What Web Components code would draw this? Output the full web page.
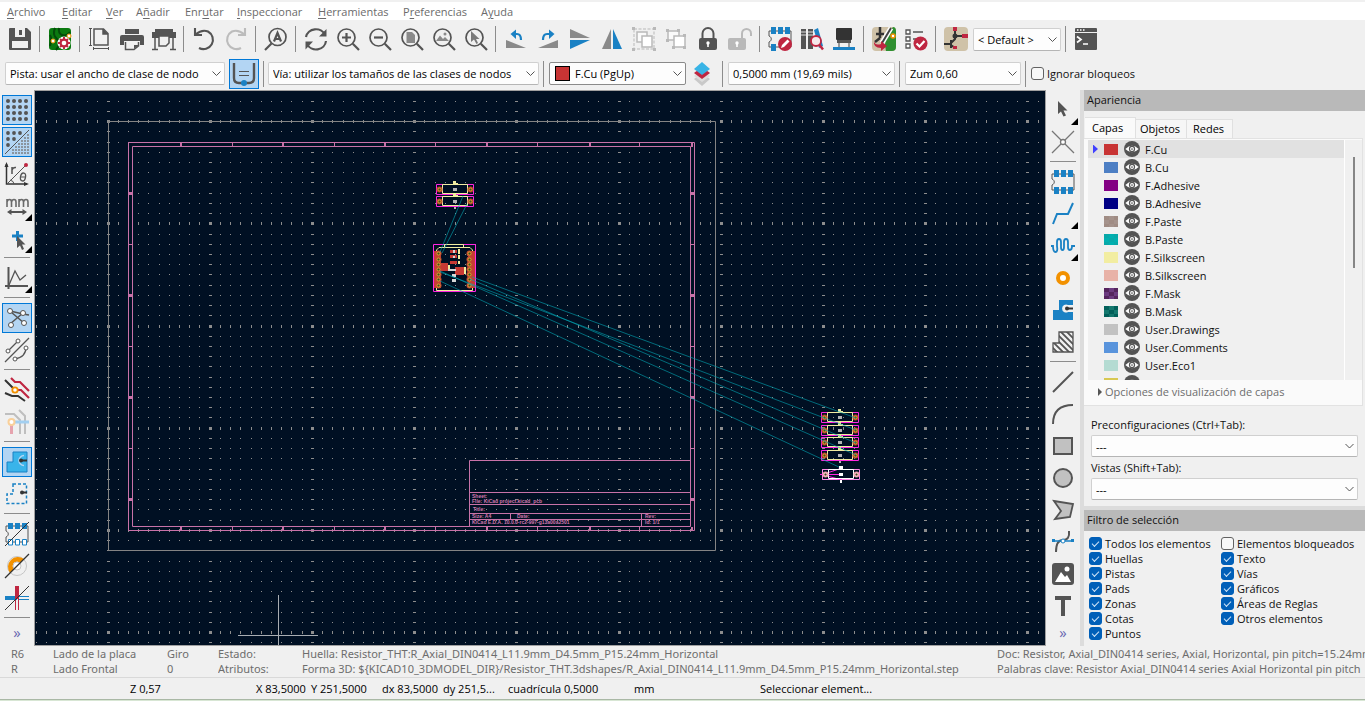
<!DOCTYPE html>
<html lang="es">
<head>
<meta charset="utf-8">
<title>Editor de placas</title>
<style>
html,body{margin:0;height:100%}
body{font:11px/15px "Open Sans","Noto Sans",sans-serif;color:#111;background:#f0f0f0;overflow:hidden}
</style>
</head>
<body>
<pcb-app></pcb-app>
<script>
const D='#545454',B='#1a81c4',R='#bf2641',G='#b9b9b9',O='#f29100';
const lens=(inner)=>`<circle cx="10.5" cy="10.5" r="8.5" fill="none" stroke="${D}" stroke-width="1.7"/><path d="M16.8 16.8L23 23" stroke="${D}" stroke-width="2.2"/>${inner}`;
const rects=(fill,list)=>list.map(([x,y,w,h])=>`<rect x="${x}" y="${y}" width="${w}" height="${h}" fill="${fill}"/>`).join('');
const chip=(pads)=>`<path d="M1 4H23V20H1V15C4 14 4 10 1 9Z" fill="none" stroke="${D}"/>${pads}`;
const ICONS={
save:`<path d="M2 1H19L23 5V22Q23 23 22 23H2Q1 23 1 22V2Q1 1 2 1Z" fill="${D}"/><path d="M7 1H17V10H7ZM4 14H20V21H4Z" fill="#f0f0f0"/><path d="M11 3H14V8H11Z" fill="${D}"/>`,
board:`<rect x="1" y="1" width="22" height="22" rx="3" fill="#0b7a10"/><path d="M7 1Q4 8 9 12T8 23M11 1Q10 6 14 8T22 5M2 8Q4 11 2 19" fill="none" stroke="#044a0a" stroke-width="2"/><circle cx="5" cy="14" r="2" fill="#fff" stroke="${O}"/><circle cx="21" cy="9" r="2" fill="#fff" stroke="${O}"/><circle cx="16" cy="16" r="6.5" fill="#fff"/><circle cx="16" cy="16" r="4.5" fill="${R}"/><path d="M16 10V22M10 16H22M12 12L20 20M20 12L12 20" stroke="${R}" stroke-width="2"/><circle cx="16" cy="16" r="2.3" fill="#fff"/>`,
page:`<path d="M6 2H15.5L20 6.5V18H6ZM15 2V7H20" fill="none" stroke="${D}" stroke-width="1.5"/><path d="M15 2L20 7H15Z" fill="${D}"/><path d="M1 1.5H4M2.5 1.5V18.5M1 18.5H4M5.5 20V23M5.5 21.5H20.5M20.5 20V23" stroke="${D}" fill="none"/>`,
print:`<path d="M5 2H19V7H5ZM2 8H22Q24 8 24 10V18H20V14H4V18H0V10Q0 8 2 8Z" fill="${D}"/><path d="M5.5 15V22.5H14L18.5 19V15" fill="none" stroke="${D}" stroke-width="1.5"/><path d="M14 22V18H19Z" fill="${D}"/>`,
plot:`<path d="M3 2H21V5H24V11H0V5H3Z" fill="${D}"/><path d="M3 11V22M21 11V22M0 22.5H6M18 22.5H24" stroke="${D}" stroke-width="1.5"/><path d="M7 9H17V16L14 19H7Z" fill="#f0f0f0" stroke="${D}" stroke-width="1.5"/>`,
undo:`<path d="M3 1V8H10M3.5 7.5Q10 2 16 4.5A8.5 8.5 0 1 1 7 21" fill="none" stroke="${D}" stroke-width="2.1"/>`,
redo:`<path d="M21 1V8H14M20.5 7.500Q14 2 8 4.500A8.500 8.500 0 1 0 17 21" fill="none" stroke="#bcbcbc" stroke-width="2.1"/>`,
find:`<circle cx="13.5" cy="10" r="8.5" fill="none" stroke="${D}" stroke-width="1.7"/><path d="M7.5 16.5L1 23" stroke="${D}" stroke-width="2.2"/><path d="M10 14.500L13.500 6L17 14.500M11 12H16" fill="none" stroke="${D}" stroke-width="2.200"/>`,
refresh:`<path d="M2 10A10 9.5 0 0 1 21 8M22 14A10 9.5 0 0 1 3 17" fill="none" stroke="${D}" stroke-width="2.2"/><path d="M22.5 2V9.5H15ZM1.5 22.5V14.5H9Z" fill="${D}"/>`,
zin:lens(`<path d="M6 10.5H15M10.5 6V15" stroke="${D}" stroke-width="2.2"/>`),
zout:lens(`<path d="M6 10.5H15" stroke="${D}" stroke-width="2.2"/>`),
zpage:lens(`<path d="M6.5 5H12L15 8V16H6.5Z" fill="#8a8a8a"/>`),
zobj:lens(`<path d="M4 14L8 8.5 11 12 13 10 17 14Z" fill="#8a8a8a"/><circle cx="13" cy="7" r="1.5" fill="#8a8a8a"/>`),
zsel:lens(`<path d="M7 4V15L10 12.5 12.5 17 14 16 12 12H15.5Z" fill="#7a7a7a"/>`),
rotl:`<path d="M2 13V21H22Z" fill="#8a8a8a"/><path d="M9 7H13Q17 7 17 13" fill="none" stroke="${B}" stroke-width="2.2"/><path d="M12 2.5L6.5 7 12 12Z" fill="${B}"/>`,
rotr:`<path d="M22 13V21H2Z" fill="#8a8a8a"/><path d="M15 7H11Q7 7 7 13" fill="none" stroke="${B}" stroke-width="2.2"/><path d="M13 2.5L18.5 7 13 12Z" fill="${B}"/>`,
flipv:`<path d="M2 2L22 11H2Z" fill="#8a8a8a"/><path d="M2 13H22L2 22Z" fill="${B}"/>`,
fliph:`<path d="M11 2V22H2Z" fill="#8a8a8a"/><path d="M13 2V22H22Z" fill="${B}"/>`,
group:`<rect x="2" y="2" width="20" height="20" fill="none" stroke="${G}" stroke-dasharray="3 1.5"/><path d="M5 5H15V15H5Z" fill="#fafafa" stroke="${G}" stroke-width="1.5"/><path d="M10 9H20V20H10Z" fill="#fff" stroke="${G}" stroke-width="1.5"/>${rects(G,[[0,0,3,3],[21,0,3,3],[0,21,3,3],[21,21,3,3]])}`,
ungroup:`<path d="M4 4H15V13H4Z" fill="#fafafa" stroke="${G}" stroke-width="1.5"/><path d="M10 9H21V20H10Z" fill="#fff" stroke="${G}" stroke-width="1.5"/>${rects(G,[[2,2,3,3],[13,2,3,3],[2,12,3,3],[8,19,3,3],[19,19,3,3],[19,7,3,3]])}`,
lock:`<rect x="3" y="11" width="18" height="12" rx="2" fill="${D}"/><path d="M6.500 12V6.500A5.500 5.500 0 0 1 17.500 6.500V12" fill="none" stroke="${D}" stroke-width="2"/><circle cx="12" cy="16" r="1.7" fill="#fff"/><path d="M11.2 16H12.8V20H11.2Z" fill="#fff"/>`,
unlock:`<rect x="0" y="11" width="18" height="12" rx="2" fill="${G}"/><path d="M14 12V6.500A4.500 4.500 0 0 1 23 6.500V9" fill="none" stroke="${G}" stroke-width="2"/><circle cx="9" cy="16" r="1.7" fill="#fff"/><path d="M8.2 16H9.8V20H8.2Z" fill="#fff"/>`,
fpedit:chip(rects(B,[[3,0,5,7],[10,0,5,7],[17,0,5,7],[3,17,5,7]]))+`<circle cx="17" cy="17" r="7" fill="${R}"/><path d="M13 21L14 18 19.5 12.5 21.5 14.5 16 20Z" fill="#fff"/>`,
fplib:`<path d="M1 2H6V22H1ZM8 2H13V22H8Z" fill="${D}"/><path d="M14 3L18 1 23 19 19 21Z" fill="${B}"/><path d="M1 5H6M1 8H6M8 5H13M8 8H13" stroke="#ddd"/><circle cx="16" cy="14" r="5" fill="#f5e8ea" stroke="${R}" stroke-width="1.8"/><path d="M19.5 18L23 22.5" stroke="${R}" stroke-width="2.5"/>`,
view3d:`<rect x="4" y="1" width="16" height="12" rx="1" fill="#333"/><rect x="5" y="13" width="14" height="3" fill="#555"/><path d="M7 16V20M17 16V20" stroke="#999" stroke-width="2"/><path d="M1 20H23V23H1Z" fill="${B}"/>`,
update:`<rect x="0" y="0" width="24" height="24" rx="4" fill="#cfc2a8"/><path d="M14 24Q10 12 21 0Q24 0 24 4V20Q24 24 20 24Z" fill="#2f8f30"/><path d="M8 0V11M4 7H12M8 11L3 15" stroke="#333" stroke-width="2.5"/><path d="M19 1L10 16" stroke="#fff" stroke-width="5"/><path d="M19 1L10 16" stroke="#444" stroke-width="2"/><circle cx="21" cy="9" r="2" fill="#fff" stroke="${O}" stroke-width="1.5"/><path d="M2 14Q3 19 9 17V14L15 19 9 24V21Q1 21 2 14Z" fill="${R}"/>`,
drc:`<path d="M2 3H6V7H2ZM2 10H6V14H2ZM2 17H6V21H2Z" fill="#fff" stroke="${D}" stroke-width="1.3"/><path d="M9 5H19M9 12H14" stroke="${D}" stroke-width="1.5"/><circle cx="16.5" cy="16.5" r="7" fill="${R}"/><path d="M12.5 16.5L15.5 19.5 20.5 14" fill="none" stroke="#fff" stroke-width="2.2"/>`,
schem:`<rect x="0" y="0" width="24" height="24" rx="4" fill="#cfc2a8"/><path d="M0 17H7M7 13V21M7 16L11 12V4M11 9H18M7 18L11 21" fill="none" stroke="#333" stroke-width="2"/><circle cx="11" cy="9" r="2.5" fill="#333"/>${rects(R,[[9,0,4,4],[18,7,6,4],[9,19,4,3]])}`,
console:`<path d="M2 1H22Q23 1 23 2V5H1V2Q1 1 2 1ZM1 6H23V22Q23 23 22 23H2Q1 23 1 22Z" fill="${D}"/><path d="M3 3H4.5M6 3H7.5M9 3H10.5" stroke="#fff" stroke-width="1.5"/><path d="M3 9.500L7 12.500 3 15.500M9 17H14" fill="none" stroke="#fff" stroke-width="1.7"/>`,
autow:`<path d="M2 1V16Q2 21 7 21H17Q22 21 22 16V1" fill="none" stroke="${D}" stroke-width="2.4"/><path d="M7 9.500H17M7 13.500H17" stroke="${D}"/><circle cx="12" cy="21" r="3" fill="${B}"/>`,
layers:`<path d="M12 11L20 17 12 24 4 17Z" fill="#c9c9c9"/><path d="M12 8L20 14 12 20 4 14Z" fill="#ddd"/><path d="M12 5L20 11 12 17 4 11Z" fill="${R}"/><path d="M12 0L20 7 12 13 4 7Z" fill="#39b4e6"/>`,
grid:[3,9,15,21].map(y=>[3,9,15,21].map(x=>`<circle cx="${x}" cy="${y}" r="2" fill="${D}"/>`).join('')).join(''),
gridov:`<g fill="${D}"><circle cx="3" cy="3" r="1.9"/><circle cx="9" cy="3" r="1.9"/><circle cx="15" cy="3" r="1.9"/><circle cx="3" cy="9" r="1.9"/><circle cx="9" cy="9" r="1.9"/><circle cx="3" cy="15" r="1.9"/></g><path d="M0 24L24 0" stroke="${D}"/><g fill="#8a949e">${[[23,5],[20,8],[23,8],[17,11],[20,11],[23,11],[14,14],[17,14],[20,14],[23,14],[11,17],[14,17],[17,17],[20,17],[23,17],[8,20],[11,20],[14,20],[17,20],[20,20],[23,20],[8,23],[11,23],[14,23],[17,23],[20,23],[23,23]].map(([x,y])=>`<rect x="${x-1}" y="${y-1}" width="2" height="2"/>`).join('')}</g>`,
polar:`<path d="M1.5 2V22H22" fill="none" stroke="#333" stroke-width="1.5"/><path d="M1.5 0L3.5 5H-.5ZM24 22L19 20V24Z" fill="#333"/><path d="M2 22L21 3M5 18Q9 19 9 22" fill="none" stroke="${D}"/><circle cx="21" cy="3" r="2" fill="${R}"/><path d="M7 12V5M7 8Q8 5 11 5.500" fill="none" stroke="${D}" stroke-width="1.5"/><ellipse cx="18" cy="15" rx="2.5" ry="4" fill="none" stroke="${D}" stroke-width="1.3" transform="rotate(12 18 15)"/><path d="M16 15H20" stroke="${D}"/>`,
mm:`<path d="M2 13V5M2 8Q2.500 5.500 4.500 5.500T6.500 8V13M6.500 8Q7 5.500 9 5.500T11 8V13M14 13V5M14 8Q14.500 5.500 16.500 5.500T18.500 8V13M18.500 8Q19 5.500 21 5.500T23 8V13" fill="none" stroke="#6a6a6a" stroke-width="1.6"/><path d="M5 18H19" stroke="${D}" stroke-width="2"/><path d="M6.5 15V21L2 18ZM17.5 15V21L22 18Z" fill="${D}"/>`,
cursor:`<path d="M7 10H18M12.5 5V15" stroke="${B}" stroke-width="3"/><path d="M12 10V22L15 19.500 17 24 19 23 17 18.500H20.500Z" fill="${D}"/>`,
axes:`<path d="M3.5 1V20H23M0 20H3M3.5 20V23" fill="none" stroke="${D}" stroke-width="2"/><path d="M4 19L10 5 15 14 21 9" fill="none" stroke="${D}" stroke-width="1.3"/>`,
rats:`<path d="M5 5L18 8 24 9M18 7L5 18M6 6L19 17" stroke="${D}" stroke-width="1.5" fill="none"/><g fill="#fff" stroke="${D}"><circle cx="5" cy="5" r="2.5"/><circle cx="18" cy="7" r="2.5"/><circle cx="6" cy="19" r="2.5"/><circle cx="19" cy="17" r="2.5"/></g>`,
ratscurve:`<path d="M0 24L24 0M3 13L13 3M10 21Q21 19 21 9" fill="none" stroke="${D}" stroke-width="1.3"/><g fill="#fff" stroke="${D}"><circle cx="3" cy="13" r="2"/><circle cx="13" cy="3" r="2"/><circle cx="10" cy="21" r="2"/><circle cx="21" cy="10" r="2"/></g>`,
hilite:`<path d="M0 2L9 11M0 15L7 18H13L20 23" fill="none" stroke="#333" stroke-width="2"/><path d="M6 0L10 4H15L24 13M10 12H16L24 20" fill="none" stroke="${R}" stroke-width="2.2"/><circle cx="10" cy="12" r="2.7" fill="#fff" stroke="${O}" stroke-width="1.8"/>`,
dim:`<path d="M0 4H9L15 10V24M14 0L20 6V24" fill="none" stroke="#bfbfbf" stroke-width="2"/><path d="M6 12H24" stroke="#a3cff0" stroke-width="3"/><path d="M6.5 13V24" stroke="#e6a3ae" stroke-width="3"/><circle cx="6.5" cy="12" r="3" fill="#fff" stroke="#f9d09a" stroke-width="2"/>`,
zone:`<path d="M8 2H22V22H2V12H8Z" fill="#39b4ea" stroke="${B}"/><path d="M19 5.500A5 5 0 1 0 19 15.500" fill="none" stroke="#b3d5f3" stroke-width="1.5"/><path d="M15 10.500H22" stroke="#333" stroke-width="2"/><circle cx="16" cy="10.5" r="2" fill="#333"/>`,
zoneout:`<path d="M8 2H21.500V21.500H2V12H8Z" fill="none" stroke="${B}" stroke-width="1.5" stroke-dasharray="3 2"/><path d="M16 10.500H22" stroke="#333" stroke-width="2"/><circle cx="17" cy="10.5" r="2" fill="#333"/>`,
fpout:chip(rects(B,[[3,1,5,6],[10,1,5,6],[17,1,5,6]])+`<path d="M3.500 17.500H7.500V23H3.500ZM10.500 17.500H14.500V23H10.500ZM17.500 17.500H21.500V23H17.500Z" fill="#fff" stroke="${B}"/>`)+`<path d="M0 24L24 0" stroke="#333"/>`,
viaout:`<circle cx="12" cy="12" r="9.5" fill="#f0f0f0" stroke="#c6c6c6"/><path d="M5 19A10 10 0 0 1 19 5L15 9A4 4 0 0 0 9 15Z" fill="${O}"/><circle cx="12" cy="12" r="4" fill="#fff" stroke="#c6c6c6"/><path d="M0 24L24 0" stroke="#333" stroke-width="1.3"/>`,
trackout:`<path d="M0 12H12" stroke="${B}" stroke-width="4"/><path d="M12 0V13" stroke="${R}" stroke-width="4"/><path d="M13 10.500H24M13 13.500H24" stroke="${B}"/><path d="M10.500 13V24M13.500 13V24" stroke="${R}"/><path d="M0 24L24 0" stroke="#333"/>`,
select:`<path d="M7 3V16L10 13.500 12.500 18.500 15 17.500 12.500 12.500H16.500Z" fill="${D}"/>`,
localrats:`<path d="M1 1L10 10M14 14L23 23M23 1L14 10M10 14L1 23" stroke="#777" stroke-width="1.3"/><circle cx="12" cy="12" r="2.5" fill="#fff" stroke="#777" stroke-width="1.3"/>`,
footprint:chip(rects(B,[[3,0,5,7],[10,0,5,7],[17,0,5,7],[3,17,5,7],[10,17,5,7],[17,17,5,7]])),
track:`<path d="M2 22L6 12H17L22 1" fill="none" stroke="${B}" stroke-width="2"/>`,
tune:`<path d="M0 12H2Q2 18 4.500 18T6 12V8Q6 5 8 5T10 8V13Q10 16 11.500 16T13 13V8Q13 5 15 5T17 8V13Q17 16 19 16T21 12H24" fill="none" stroke="${B}" stroke-width="1.8"/>`,
via:`<circle cx="12" cy="12" r="5" fill="#fff" stroke="${O}" stroke-width="4"/>`,
addzone:`<path d="M8 2H22V22H2V12H8Z" fill="${B}"/><path d="M22 7H17A4 4 0 1 0 17 14H22Z" fill="#f0f0f0"/><path d="M16 10.500H22" stroke="#333" stroke-width="2"/><circle cx="16" cy="10.5" r="2" fill="#333"/>`,
rule:`<clipPath id="z"><path d="M8 2H22V22H2V13H8Z"/></clipPath><path clip-path="url(#z)" d="M-2 8L16 26M2 6L22 26M3 1L26 24M8 0L26 18M13 -1L26 12M-3 13L12 28M18 -2L26 6" stroke="${D}" stroke-width="1.8"/><path d="M8 2H22V22H2V13H8Z" fill="none" stroke="${D}" stroke-width="1.3"/>`,
line:`<path d="M2 22L22 2" stroke="${D}" stroke-width="2"/>`,
arc:`<path d="M2 22Q2 3 22 3" fill="none" stroke="${D}" stroke-width="2"/>`,
rect:`<rect x="3" y="4" width="18" height="16" fill="#c1c1c1" stroke="${D}" stroke-width="2"/>`,
circle:`<circle cx="12" cy="12" r="9" fill="#c1c1c1" stroke="${D}" stroke-width="2"/>`,
poly:`<path d="M3 3L22 6 19 19 4 21 10 13Z" fill="#c1c1c1" stroke="${D}" stroke-width="1.8"/>`,
bezier:`<path d="M18 1Q19 10 12 10T5 22" fill="none" stroke="${D}" stroke-width="2"/><path d="M2 11H22" stroke="${B}" stroke-width="1.5"/>${rects(B,[[1,9,3,3],[20,9,3,3]])}<circle cx="12" cy="11" r="2" fill="#fff" stroke="${B}"/>`,
image:`<rect x="1" y="1" width="22" height="22" rx="3" fill="${D}"/><path d="M4 20L10 10 14 15 16 13 20 20Z" fill="#fff"/><circle cx="16" cy="7" r="2.5" fill="#fff"/>`,
text:`<path d="M4 4H20M12 4V22" fill="none" stroke="${D}" stroke-width="4"/>`,
eye:`<circle cx="12" cy="12" r="12" fill="${D}"/><path d="M2 12Q12 2 22 12Q12 22 2 12Z" fill="#fff"/><circle cx="12" cy="12" r="4.7" fill="${D}"/><circle cx="12" cy="12" r="2.9" fill="#fff"/><circle cx="12" cy="12" r="1.3" fill="${D}"/>`
};

/* Registers a custom element whose shadow root is built from a style and a template function. */
function define(name,css,html){
  customElements.define(name,class extends HTMLElement{
    connectedCallback(){
      if(this.shadowRoot)return;
      this.attachShadow({mode:'open'});
      const t=document.createElement('template');
      t.innerHTML=`<style>*{box-sizing:border-box}${css}</style>`+html(this);
      this.shadowRoot.append(t.content.cloneNode(true));
    }
  });
}
const at=(e,n,d='')=>e.getAttribute(n)??d;

define('pcb-icon',`:host{display:block;width:24px;height:24px}:host([small]){width:16px;height:16px}svg{display:block;width:100%;height:100%;overflow:visible}`,
  e=>`<svg viewBox="0 0 24 24" aria-hidden="true">${ICONS[at(e,'name')]}</svg>`);

define('pcb-tool',`:host{display:flex;width:32px;height:32px;flex:none;align-items:center;justify-content:center}
button{position:relative;display:grid;place-items:center;width:30px;height:30px;padding:0;border:1px solid transparent;background:none}
:host([active]) button{border-color:#0078d7;background:#b3d5f3}
:host([flyout]) button::after{content:"";position:absolute;right:-1px;bottom:-1px;border-left:7px solid transparent;border-bottom:7px solid #000}`,
  e=>`<button type="button" aria-label="${at(e,'icon')}"><pcb-icon name="${at(e,'icon')}"></pcb-icon></button>`);

define('pcb-sep',`:host{display:block;flex:none;width:1px;height:26px;background:#8c8c8c;margin:0 4px 0 3px}
:host([wide]){margin:0 5px 0 4px}:host([row]){width:26px;height:1px;margin:3px 0 4px}`,()=>'');

define('pcb-more',`:host{display:block;margin-top:3px}button{display:block;border:0;padding:0;background:none;font:15px/15px "Open Sans",sans-serif;color:#6767b0}`,
  ()=>`<button type="button" aria-label="Más">»</button>`);

define('pcb-select',`:host{display:block;position:relative;height:23px}
select{appearance:none;display:block;width:100%;height:100%;margin:0;padding:0 22px 0 4px;border:1px solid #d0d0d0;border-bottom-color:#b5b5b5;border-radius:2px;background:#fdfdfd;font:inherit;color:#000}
:host([swatch]) select{padding-left:25px;border-color:#8a8a8a}
i{position:absolute;left:6px;top:4px;width:15px;height:15px;border:1px solid #000;background:#c83434}
svg{position:absolute;right:4px;top:0;width:9px;height:100%;pointer-events:none}`,
  e=>`<select aria-label="${at(e,'label')}"><option>${at(e,'value').replace('<','&lt;')}</option></select>${e.hasAttribute('swatch')?'<i></i>':''}<svg viewBox="0 0 9 9"><path d="M.5 2.500L4.500 6.500 8.500 2.500" fill="none" stroke="#555"/></svg>`);

define('pcb-check',`:host{display:block}label{display:flex;align-items:center;gap:3px;height:15px;white-space:nowrap}
input{appearance:none;flex:none;width:13px;height:13px;margin:0;border:1px solid #626262;border-radius:3px;background:#f8f8f8}
input:checked{border-color:#005fb8;background:#005fb8}
input:checked::after{content:"";display:block;width:6px;height:3px;margin:3px 0 0 2px;border:solid #cfe4f7;border-width:0 0 1px 1px;transform:rotate(-45deg)}`,
  e=>`<label><input type="checkbox" ${e.hasAttribute('checked')?'checked':''}><span><slot></slot></span></label>`);

define('pcb-menu',`:host{display:block;background:#fff;border-top:2px solid #f0f0f0;height:20px;color:#6b6b6b}
nav{display:grid;grid-template-columns:55px 44px 30px 49px 52px 81px 85px 78px 50px;padding-left:7px}
button{border:0;padding:0;background:none;font:inherit;line-height:20px;height:18px;color:inherit;text-align:left}u{text-underline-offset:2px}`,
  ()=>`<nav>${['<u>A</u>rchivo','<u>E</u>ditar','<u>V</u>er','A<u>ñ</u>adir','Enr<u>u</u>tar','<u>I</u>nspeccionar','<u>H</u>erramientas','P<u>r</u>eferencias','A<u>y</u>uda'].map(s=>`<button type="button">${s}</button>`).join('')}</nav>`);

define('pcb-bar',`:host{display:flex;align-items:center;height:38px;padding-left:4px;background:#f0f0f0}
:host([options]){height:32px;padding:0 0 1px 5px}
:host([column]){flex-direction:column;height:auto;padding:4px 0 0;overflow:hidden}`,()=>`<slot></slot>`);

define('pcb-board',`:host{display:block;overflow:hidden;background:#001023;border:1px solid #a0a0a0}
svg{display:block;width:100%;height:100%}text{font:bold 5px "Liberation Sans",sans-serif;fill:#d079ae}`,()=>{
  const X=i=>Math.floor(108+10.22*i),Y=j=>Math.floor(121.6+10.22*j);
  let g='';
  for(let j=-2;j<90;j++)for(let i=-7;i<200;i++){
    const mx=i%10===0,my=j%10===0,x=X(i),y=Y(j);
    g+=`M${mx?x-1:x} ${my?y-1:y}h${mx?3:1}v${my?3:1}h${mx?-3:-1}z`;
  }
  const pad=(x,y,c='#b5402c',r='#e0a030')=>`<circle cx="${x}" cy="${y}" r="3" fill="${c}"/><circle cx="${x}" cy="${y}" r="1.5" fill="#40501c" stroke="${r}"/>`;
  const res=y=>`<path d="M.5 ${y-5}h37v10h-37z" stroke="#ff26e2" fill="none"/><path d="M6.500 ${y-5}h25v9h-25z" stroke="#f2eda1" fill="none"/>${pad(3.5,y)}${pad(34.5,y)}<path d="M17 ${y-8.5}h3v2h2v1h-5z" fill="#f2eda1"/><path d="M17 ${y-1.5}h4v3h-4zM18 ${y+5.5}h2v2h-2z" fill="#b4b4b4"/>`;
  let frame='M128.500 142.500h566v388h-566zM132.500 146.500h558v380h-558z';
  for(const x of [232,334,435,537,639])frame+=`M${x}.5 142v4M${x}.5 526v4`;
  for(const y of [244,346,448])frame+=`M128 ${y}.5h4M690 ${y}.5h4`;
  frame+='M690 460.500H469.500V526M469 492.500H690M469 504.500H690M469 513.500H690M469 519.500H690M510.500 513V519M641.500 513V526';
  let blobs='';
  for(const x of [181,283,385,487,590,692])blobs+=`M${x-1} 143h2v4h-2zM${x-1} 527h2v3h-2z`;
  for(const y of [193,295,397,499])blobs+=`M129 ${y-1}h3v3h-3zM691 ${y-1}h3v3h-3z`;
  const pins=[253,259,264,269,274,279,285].map(y=>pad(438.5,y+.5,'#c04a30')+pad(469.5,y+.5,'#c04a30')).join('');
  return `<svg role="img" aria-label="Placa"><g transform="translate(-35 -91)">
<path d="${g}" fill="#8d8d8d" shape-rendering="crispEdges"/>
<path d="M108.500 121.500H715.500V550.500H108.500Z" fill="none" stroke="#848484"/>
<path d="${frame}" fill="none" stroke="#c872a8"/><path d="${blobs}" fill="#c872a8"/>
<text x="472" y="498">Sheet:</text><text x="472" y="503">File: KiCad project.kicad_pcb</text><text x="473" y="511" font-style="italic">Title:</text><text x="472" y="518">Size: A4</text><text x="517" y="518">Date:</text><text x="645" y="518">Rev:</text><text x="472" y="524">KiCad E.D.A. 10.0.0-rc2-997-g13a00a2501</text><text x="645" y="524">Id: 1/1</text>
<g transform="translate(436 0)">${res(189.5)}${res(201.5)}</g>
<g transform="translate(821 0)">${res(417.5)}${res(430.5)}${res(442.5)}${res(455.5)}</g>
<path d="M434 251h7v37h-7zM468 251h7v37h-7zM441 263h7v8h-7zM455 267h9v8h-9zM450 250h7v3h-7zM450 255h7v3h-7zM450 261h7v3h-7z" fill="#c83a34"/>
<path d="M433.500 244.500h42v47h-42z" fill="none" stroke="#ff26e2"/>
<path d="M436.500 251V250L439 247.500H470L472.500 250V251M436.500 288V290.500H472.500V288M444.500 247V244.500H463.500V247" fill="none" stroke="#f2eda1"/>
<path d="M458 249h2v5h-2zM458 255h2v4h-2zM458 261h2v3h-2zM448 265h2v5h-2zM464 267h2v7h-2z" fill="#f2eda1"/>
${pins}
<path d="M452 274h4v3h-4zM452 279h4v3h-4zM448 269h8v2h-8zM453 250h2v3h-2zM453 256h2v2h-2z" fill="#d8d8d8"/>
<path d="M472 277L856 418M440 272L856 430M470 279L856 443M440 271L856 455M440 281L841 468M463 196L440 252M467 204L442 253" fill="none" stroke="#00a6b4" stroke-opacity=".6"/>
<path d="M822.500 469.500h37v10h-37z" fill="none" stroke="#ff8ae8"/>
<path d="M820 474.500H842M827 473L842 468M827 476L842 480" stroke="#ff26e2"/>
<path d="M828.500 469.500h25v9h-25z" fill="none" stroke="#fff"/>
${pad(825.5,474.5,'#f09aa8','#ffc8d8')}${pad(856.5,474.5,'#f09aa8','#ffc8d8')}
<path d="M839 466h4v3h-4zM839 473h4v3h-4zM840 480h2v3h-2z" fill="#fff"/>
<path d="M278.500 595V646M238 635.500H318" stroke="#a8adb2"/>
</g></svg>`;});

define('pcb-layer',`:host{display:flex;align-items:center;height:18px;flex:none}
:host([current]){background:#e1e1e1}
b{width:5px;margin:0 6px 0 5px;height:9px}:host([current]) b{background:#4040ff;clip-path:polygon(0 0,100% 50%,0 100%)}
i{width:14px;height:11px;background:var(--c)}
:host([checker]) i{background:repeating-conic-gradient(var(--c) 0 25%,var(--d) 0 50%) 0 0/10px 8px}
button{border:0;padding:0;margin:0 5px 0 6px;background:none}`,
  ()=>`<b></b><i></i><button type="button" aria-label="Visibilidad"><pcb-icon name="eye" small></pcb-icon></button><span><slot></slot></span>`);

define('pcb-title',`:host{display:block;flex:none;height:21px;padding-left:3px;line-height:20px;background:#b9b9b9}`,()=>`<slot></slot>`);

const LAYERS=[['F.Cu','#c83434'],['B.Cu','#4d7fc4'],['F.Adhesive','#840084'],['B.Adhesive','#000084'],['F.Paste','#a5938c','#a08c84'],['B.Paste','#00b0b0','#08a8a8'],['F.Silkscreen','#f2eda1'],['B.Silkscreen','#e8b2a7'],['F.Mask','#6c3a80','#55245e'],['B.Mask','#14786e','#02605a'],['User.Drawings','#c2c2c2'],['User.Comments','#5994dc'],['User.Eco1','#b4dbd2'],['','#d8c852']];
define('pcb-layers',`:host{display:flex;flex-direction:column;flex:1;min-height:0;background:#f0f0f0}
.tabs{display:flex;align-items:flex-end;padding:6px 0 0 1px;height:27px;flex:none}
.tabs button{height:19px;width:51px;padding:0 0 2px 4px;border:1px solid #e0e0e0;border-bottom:0;border-left:0;background:#f6f6f6;font:inherit;color:#000;text-align:left}
.tabs button:first-child{height:21px;padding:0 0 2px 7px;background:#fafafa}.tabs button:last-child{width:46px;padding-left:6px}
.box{display:flex;flex-direction:column;flex:1;min-height:0;margin:0 2px 0 0;border:1px solid #e2e2e2;border-left:0;background:#fafafa}
.scroll{display:grid;grid-template-columns:minmax(0,1fr) 18px;flex:1;min-height:0;margin:1px 0 0 4px}
.list{display:flex;flex-direction:column;overflow:hidden;background:#f0f0f0}
.track{padding:17px 0 0 8px;background:#f0f0f0;border-left:1px solid #fff}
.thumb{width:2px;height:111px;background:#868686}
.opts{display:block;height:25px;flex:none;padding:0 0 2px 14px;border:0;background:none;font:inherit;color:#6d6d6d;text-align:left}
.opts::before{content:"";display:inline-block;margin-right:3px;border:4px solid transparent;border-left:4px solid #555;border-right:0}`,
  ()=>`<div class="tabs"><button type="button">Capas</button><button type="button">Objetos</button><button type="button">Redes</button></div>
<div class="box"><div class="scroll"><div class="list">${LAYERS.map(([n,c,d],i)=>`<pcb-layer ${i?'':'current'} ${d?'checker':''} style="--c:${c};--d:${d}">${n}</pcb-layer>`).join('')}</div><div class="track"><div class="thumb"></div></div></div>
<button class="opts" type="button">Opciones de visualización de capas</button></div>`);

define('pcb-field',`:host{display:block}span{display:block;height:16px;margin-bottom:2px}pcb-select{height:22px}`,
  e=>`<span>${at(e,'label')}</span><pcb-select label="${at(e,'label')}" value="---"></pcb-select>`);

define('pcb-panel',`:host{display:flex;flex-direction:column;min-height:0;border-left:4px solid #dcdcdc}
.fields{display:grid;gap:3px;flex:none;padding:11px 7px 6px;border-bottom:4px solid #dcdcdc}
.filter{display:grid;grid-template-columns:132px auto;grid-template-rows:repeat(7,15px);grid-auto-flow:column;padding:5px;flex:none}`,
  ()=>`<pcb-title>Apariencia</pcb-title><pcb-layers></pcb-layers>
<div class="fields"><pcb-field label="Preconfiguraciones (Ctrl+Tab):"></pcb-field><pcb-field label="Vistas (Shift+Tab):"></pcb-field></div>
<pcb-title>Filtro de selección</pcb-title>
<div class="filter">${['Todos los elementos','Huellas','Pistas','Pads','Zonas','Cotas','Puntos'].map(t=>`<pcb-check checked>${t}</pcb-check>`).join('')}<pcb-check>Elementos bloqueados</pcb-check>${['Texto','Vías','Gráficos','Áreas de Reglas','Otros elementos'].map(t=>`<pcb-check checked>${t}</pcb-check>`).join('')}</div>`);

define('pcb-info',`:host{display:grid;grid-template-columns:42px 114px 51px 84px 695px minmax(0,1fr);height:31px;padding:0 0 0 11px;font-family:"Noto Sans",sans-serif;color:#6d6d6d;white-space:nowrap;overflow:hidden}div{overflow:hidden}`,
  ()=>[['R6','R'],['Lado de la placa','Lado Frontal'],['Giro','0'],['Estado:','Atributos:'],['Huella: Resistor_THT:R_Axial_DIN0414_L11.9mm_D4.5mm_P15.24mm_Horizontal','Forma 3D: ${KICAD10_3DMODEL_DIR}/Resistor_THT.3dshapes/R_Axial_DIN0414_L11.9mm_D4.5mm_P15.24mm_Horizontal.step'],['Doc: Resistor, Axial_DIN0414 series, Axial, Horizontal, pin pitch=15.24mm','Palabras clave: Resistor Axial_DIN0414 series Axial Horizontal pin pitch']].map(([a,b])=>`<div>${a}<br>${b}</div>`).join(''));

define('pcb-status',`:host{display:grid;grid-template-columns:126px 55px 71px 61px 65px 126px 126px 1fr;height:24px;padding-left:130px;line-height:22px;white-space:nowrap;border-top:1px solid #d9d9d9;border-bottom:1px solid #d8e6d4;box-shadow:inset 0 -1px #a9b8a5;color:#000}`,
  ()=>['Z 0,57','X 83,5000','Y 251,5000','dx 83,5000','dy 251,5...','cuadrícula 0,5000','mm','Seleccionar element...'].map(s=>`<span>${s}</span>`).join(''));

const tools=s=>s.split(' ').map(n=>n==='|'?'<pcb-sep></pcb-sep>':n==='-'?'<pcb-sep row></pcb-sep>':`<pcb-tool icon="${n.replace(/[*+]/g,'')}" ${n.includes('*')?'active':''} ${n.includes('+')?'flyout':''}></pcb-tool>`).join('');
define('pcb-app',`:host{display:grid;grid-template-rows:auto auto auto minmax(0,1fr) auto auto;height:100vh}
main{display:grid;grid-template-columns:34px minmax(0,1fr) 34px 285px;min-height:0}
.preset{width:88px;margin:0 1px}.track{width:220px;margin-right:3px}.viasize{width:271px}.layer{width:137px}.gridsize{width:167px}.zoom{width:116px}`,
  ()=>`<pcb-menu></pcb-menu>
<pcb-bar>${tools('save | board | page print plot | undo redo | find | refresh zin zout zpage zobj zsel | rotl rotr flipv fliph group ungroup lock unlock | fpedit fplib view3d | update drc | schem')}<pcb-select class="preset" label="Preajuste" value="< Default >"></pcb-select><pcb-sep></pcb-sep>${tools('console')}</pcb-bar>
<pcb-bar options><pcb-select class="track" label="Ancho de pista" value="Pista: usar el ancho de clase de nodo"></pcb-select>${tools('autow*')}<pcb-sep></pcb-sep><pcb-select class="viasize" label="Tamaño de vía" value="Vía: utilizar los tamaños de las clases de nodos"></pcb-select><pcb-sep wide></pcb-sep><pcb-select class="layer" swatch label="Capa" value="F.Cu (PgUp)"></pcb-select>${tools('layers')}<pcb-sep wide></pcb-sep><pcb-select class="gridsize" label="Cuadrícula" value="0,5000 mm (19,69 mils)"></pcb-select><pcb-sep wide></pcb-sep><pcb-select class="zoom" label="Zum" value="Zum 0,60"></pcb-select><pcb-sep wide></pcb-sep><pcb-check>Ignorar bloqueos</pcb-check></pcb-bar>
<main><pcb-bar column>${tools('grid* gridov* polar mm+ cursor+ - axes+ - rats* ratscurve - hilite dim - zone* zoneout - fpout viaout trackout -')}<pcb-more></pcb-more></pcb-bar>
<pcb-board></pcb-board>
<pcb-bar column>${tools('select+ localrats - footprint track+ tune+ via addzone rule - line arc rect circle poly bezier image text')}<pcb-more></pcb-more></pcb-bar>
<pcb-panel></pcb-panel></main>
<pcb-info></pcb-info><pcb-status></pcb-status>`);
</script>
</body>
</html>
